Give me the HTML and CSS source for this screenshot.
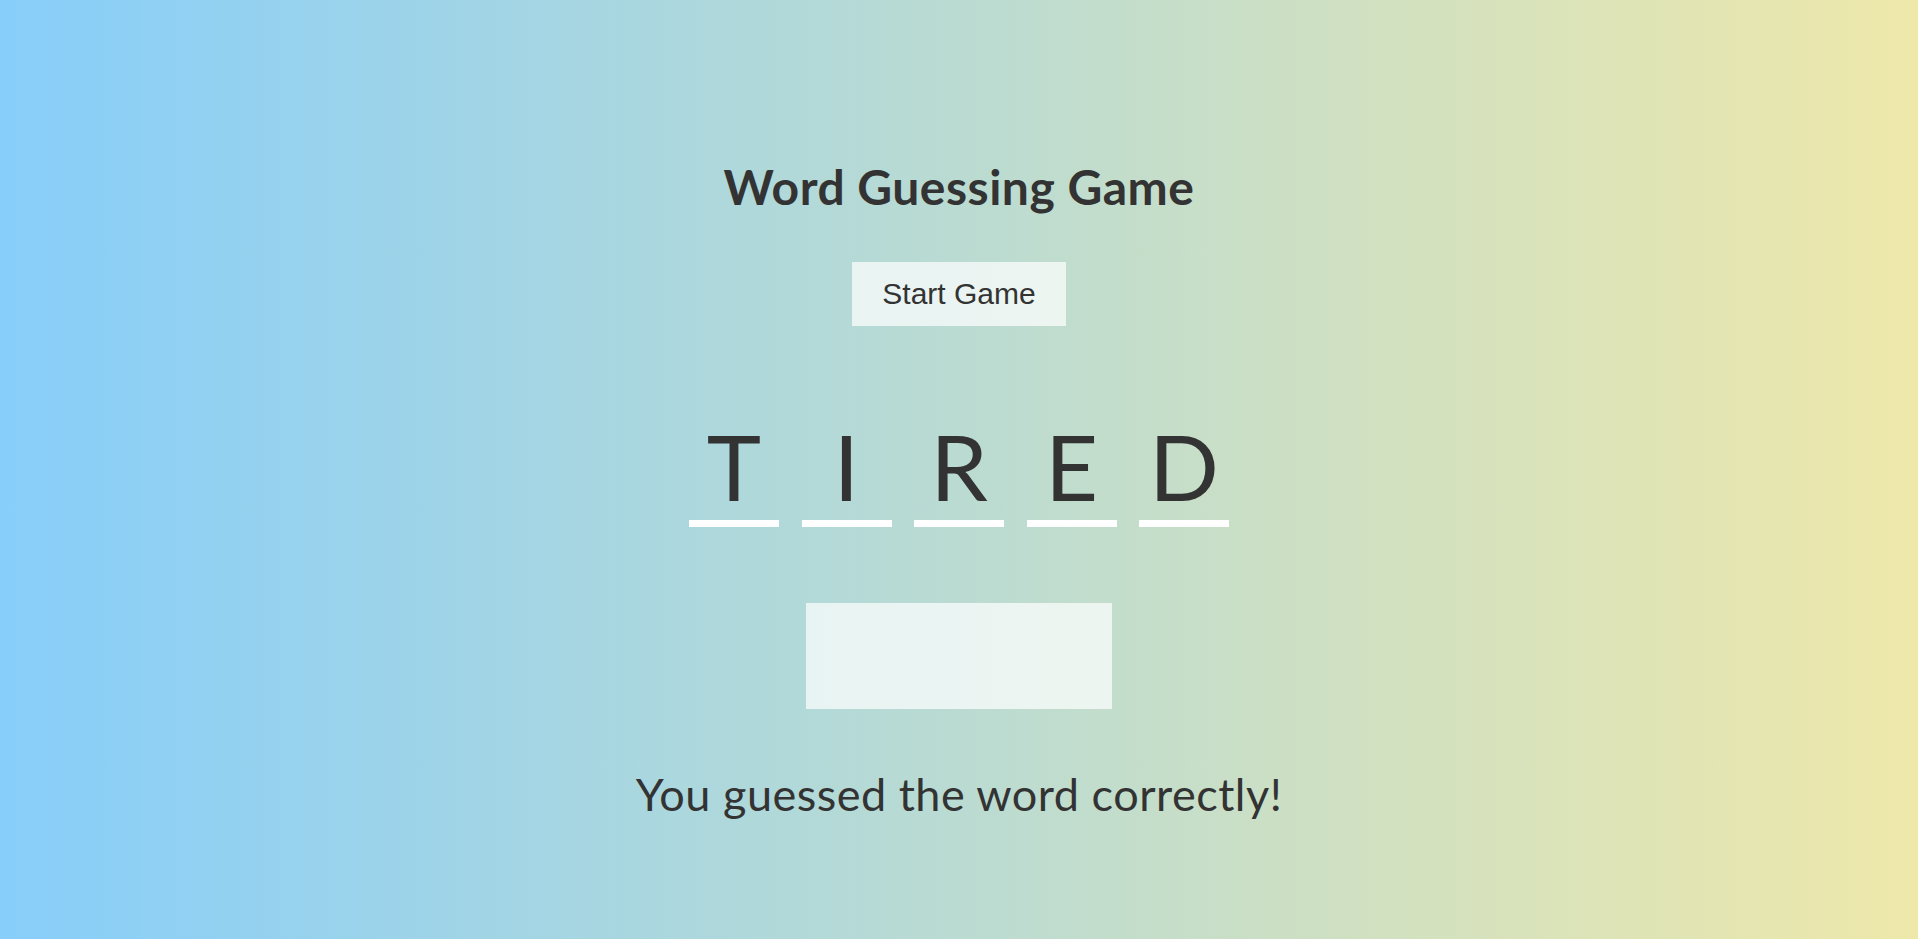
FILE: index.html
```html
<!DOCTYPE html>
<html lang="en">
<head>
<meta charset="utf-8">
<title>Word Guessing Game</title>
<link rel="stylesheet" href="styles.css">
</head>
<body>
<main class="game">
  <h1 class="title">Word Guessing Game</h1>
  <button class="start-btn" type="button">Start Game</button>
  <div class="word">
    <div class="letter">T</div>
    <div class="letter">I</div>
    <div class="letter">R</div>
    <div class="letter">E</div>
    <div class="letter">D</div>
  </div>
  <div class="guess-box"></div>
  <p class="message">You guessed the word correctly!</p>
</main>
</body>
</html>
```

FILE: styles.css
```css
html, body {
  margin: 0;
  padding: 0;
}

body {
  min-height: 100vh;
  background: linear-gradient(to right, #87cefa, #eee8aa);
  font-family: Lato, "Open Sans", "DejaVu Sans", sans-serif;
  color: #333;
}

.game {
  display: flex;
  flex-direction: column;
  align-items: center;
  padding-top: 157px;
}

.title {
  margin: 0;
  font-size: 48px;
  line-height: 60px;
  font-weight: 700;
  letter-spacing: 0.5px;
}

.start-btn {
  margin-top: 45px;
  padding: 15px 30.5px;
  border: none;
  background: rgba(255, 255, 255, 0.7);
  font-family: "Liberation Sans", Arial, sans-serif;
  font-size: 30px;
  line-height: 34px;
  color: #333;
  cursor: pointer;
}

.word {
  display: flex;
  gap: 22.5px;
  margin-top: 90px;
}

.letter {
  width: 90px;
  font-size: 92px;
  line-height: 100px;
  padding-bottom: 4px;
  text-align: center;
  border-bottom: 7px solid #fff;
}

.guess-box {
  margin-top: 76px;
  width: 306px;
  height: 106px;
  background: rgba(255, 255, 255, 0.7);
}

.message {
  margin: 57px 0 0;
  font-size: 45px;
  line-height: 56px;
  letter-spacing: 0.5px;
}
```
